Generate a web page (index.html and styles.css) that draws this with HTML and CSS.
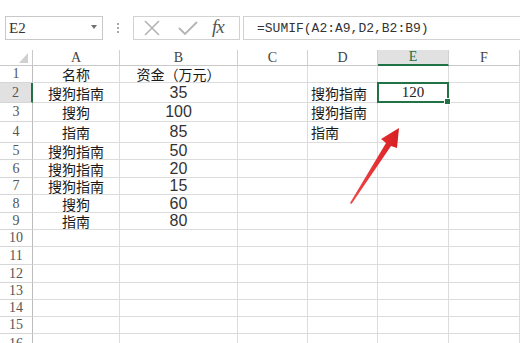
FILE: index.html
```html
<!DOCTYPE html>
<html lang="zh">
<head>
<meta charset="utf-8">
<link rel="stylesheet" href="styles.css">
</head>
<body>
<div class="toolbar">
  <div class="namebox"><span class="nb-text">E2</span><span class="nb-arrow"></span></div>
  <div class="grip"><span></span><span></span><span></span></div>
  <div class="btnbox">
    <svg class="ico-x" width="18" height="16" viewBox="0 0 18 16"><path d="M2 1 L16 15 M16 1 L2 15" stroke="#b4b4b4" stroke-width="1.6" fill="none"/></svg>
    <svg class="ico-ok" width="20" height="16" viewBox="0 0 20 16"><path d="M1 8 L7 14 L19 2" stroke="#b4b4b4" stroke-width="1.8" fill="none"/></svg>
    <span class="fx">fx</span>
  </div>
  <div class="formula">=SUMIF(A2:A9,D2,B2:B9)</div>
</div>

<div class="sheet">
  <div class="c corner"><svg width="9" height="10" viewBox="0 0 9 10"><path d="M9 0 L9 10 L0 10 Z" fill="#d0d0d0"/></svg></div>
  <div class="c ch">A</div><div class="c ch">B</div><div class="c ch">C</div><div class="c ch">D</div><div class="c ch ch-sel">E</div><div class="c ch">F</div>

  <div class="c rh">1</div><div class="c ctr zh">名称</div><div class="c ctr zh">资金（万元）</div><div class="c"></div><div class="c"></div><div class="c"></div><div class="c"></div>
  <div class="c rh rh-sel">2</div><div class="c ctr zh">搜狗指南</div><div class="c ctr num">35</div><div class="c"></div><div class="c zh">搜狗指南</div><div class="c ctr sel serifnum">120</div><div class="c"></div>
  <div class="c rh">3</div><div class="c ctr zh">搜狗</div><div class="c ctr num">100</div><div class="c"></div><div class="c zh">搜狗指南</div><div class="c"></div><div class="c"></div>
  <div class="c rh">4</div><div class="c ctr zh">指南</div><div class="c ctr num">85</div><div class="c"></div><div class="c zh">指南</div><div class="c"></div><div class="c"></div>
  <div class="c rh">5</div><div class="c ctr zh">搜狗指南</div><div class="c ctr num">50</div><div class="c"></div><div class="c"></div><div class="c"></div><div class="c"></div>
  <div class="c rh">6</div><div class="c ctr zh">搜狗指南</div><div class="c ctr num">20</div><div class="c"></div><div class="c"></div><div class="c"></div><div class="c"></div>
  <div class="c rh">7</div><div class="c ctr zh">搜狗指南</div><div class="c ctr num">15</div><div class="c"></div><div class="c"></div><div class="c"></div><div class="c"></div>
  <div class="c rh">8</div><div class="c ctr zh">搜狗</div><div class="c ctr num">60</div><div class="c"></div><div class="c"></div><div class="c"></div><div class="c"></div>
  <div class="c rh">9</div><div class="c ctr zh">指南</div><div class="c ctr num">80</div><div class="c"></div><div class="c"></div><div class="c"></div><div class="c"></div>
  <div class="c rh">10</div><div class="c"></div><div class="c"></div><div class="c"></div><div class="c"></div><div class="c"></div><div class="c"></div>
  <div class="c rh">11</div><div class="c"></div><div class="c"></div><div class="c"></div><div class="c"></div><div class="c"></div><div class="c"></div>
  <div class="c rh">12</div><div class="c"></div><div class="c"></div><div class="c"></div><div class="c"></div><div class="c"></div><div class="c"></div>
  <div class="c rh">13</div><div class="c"></div><div class="c"></div><div class="c"></div><div class="c"></div><div class="c"></div><div class="c"></div>
  <div class="c rh">14</div><div class="c"></div><div class="c"></div><div class="c"></div><div class="c"></div><div class="c"></div><div class="c"></div>
  <div class="c rh">15</div><div class="c"></div><div class="c"></div><div class="c"></div><div class="c"></div><div class="c"></div><div class="c"></div>
  <div class="c rh rh-last">16</div><div class="c"></div><div class="c"></div><div class="c"></div><div class="c"></div><div class="c"></div><div class="c"></div>
</div>

<svg class="arrow" width="520" height="343" viewBox="0 0 520 343">
  <defs>
    <linearGradient id="ag" x1="0" y1="0" x2="1" y2="0">
      <stop offset="0" stop-color="#f04a4a"/>
      <stop offset="1" stop-color="#d81e22"/>
    </linearGradient>
  </defs>
  <path d="M350 203 L386 143 L381 139 L399 128 L397 148 L391 146 L351.5 204 Z" fill="url(#ag)"/>
</svg>
</body>
</html>
```

FILE: styles.css
```css
* { box-sizing: border-box; }
html, body { margin: 0; padding: 0; }
body {
  width: 520px;
  height: 343px;
  overflow: hidden;
  background: #ffffff;
  padding-top: 16px;
  position: relative;
  font-family: "Liberation Serif", serif;
  color: #333;
}

.toolbar {
  display: flex;
  height: 24px;
  padding-left: 5px;
}
.toolbar > * { flex-shrink: 0; }
.namebox {
  width: 98px;
  border: 1px solid #c8c8c8;
  display: flex;
  align-items: center;
  justify-content: space-between;
  padding: 0 5px 0 3px;
  font-family: "Liberation Serif", serif;
  font-size: 15px;
  color: #333;
}
.nb-arrow {
  width: 0; height: 0;
  border-left: 3.5px solid transparent;
  border-right: 3.5px solid transparent;
  border-top: 4px solid #707070;
  margin-top: -3px;
}
.grip {
  width: 30px;
  display: flex;
  flex-direction: column;
  align-items: center;
  justify-content: center;
  gap: 2px;
}
.grip span {
  width: 2px; height: 2px;
  background: #a8a8a8;
}
.btnbox {
  width: 107px;
  border: 1px solid #d2d2d2;
  display: flex;
  align-items: center;
  padding-left: 9px;
}
.ico-x { margin-right: 17px; }
.ico-ok { margin-right: 14px; }
.fx {
  font-family: "Liberation Serif", serif;
  font-style: italic;
  font-size: 19px;
  color: #555;
  letter-spacing: -1px;
  margin-top: -2px;
}
.formula {
  margin-left: 3px;
  width: 300px;
  border: 1px solid #d2d2d2;
  border-right: none;
  display: flex;
  align-items: center;
  padding-left: 13px;
  font-family: "Liberation Mono", monospace;
  font-size: 13px;
  color: #333;
  white-space: nowrap;
}

.sheet {
  margin-top: 10px;
  display: grid;
  grid-template-columns: 33px 87px 118px 70px 70px 71px 71px;
  grid-template-rows: 16px 17px 20px 19px 21px 17px 18px 17px 18px 17px 17px 18px 18px 17px 17px 17px 18px;
}
.c {
  border-right: 1px solid #dcdcdc;
  border-bottom: 1px solid #dcdcdc;
  display: flex;
  align-items: center;
  white-space: nowrap;
  overflow: visible;
  min-width: 0;
  line-height: 1;
}
.corner {
  justify-content: flex-end;
  align-items: flex-end;
  padding: 0 4px 2px 0;
  border-right-color: #c8c8c8;
  border-bottom-color: #c8c8c8;
}
.ch {
  justify-content: center;
  font-family: "Liberation Serif", serif;
  font-size: 14px;
  color: #444;
  border-right-color: #d0d0d0;
  border-bottom-color: #c8c8c8;
}
.ch-sel {
  background: #e1e1e1;
  border-bottom: 2px solid #217346;
  color: #217346;
}
.rh {
  justify-content: center;
  font-family: "Liberation Serif", serif;
  font-size: 14px;
  color: #555;
  border-right-color: #bdbdbd;
  border-bottom-color: #d6d6d6;
}
.rh-last { align-items: flex-start; padding-top: 3px; }
.rh-sel {
  background: #e1e1e1;
  border-right: 2px solid #217346;
}
.ctr { justify-content: center; }
.zh {
  font-family: "Noto Sans CJK SC", "Noto Sans", sans-serif;
  font-size: 14px;
  color: #1a1a1a;
  padding-left: 3px;
}
.ctr.zh { padding-left: 0; }
.num {
  font-family: "Liberation Sans", Arial, sans-serif;
  font-size: 16px;
  color: #333;
}
.serifnum {
  font-family: "Liberation Serif", serif;
  font-size: 15px;
  color: #222;
}
.sel { position: relative; }
.sel::after {
  content: "";
  position: absolute;
  left: -1px; top: -1px; right: -1px; bottom: -1px;
  border: 2px solid #217346;
}
.sel::before {
  content: "";
  position: absolute;
  right: -3px; bottom: -3px;
  width: 5px; height: 5px;
  background: #217346;
  border: 1px solid #fff;
  z-index: 2;
}

.arrow {
  position: absolute;
  left: 0; top: 0;
  pointer-events: none;
}
```
